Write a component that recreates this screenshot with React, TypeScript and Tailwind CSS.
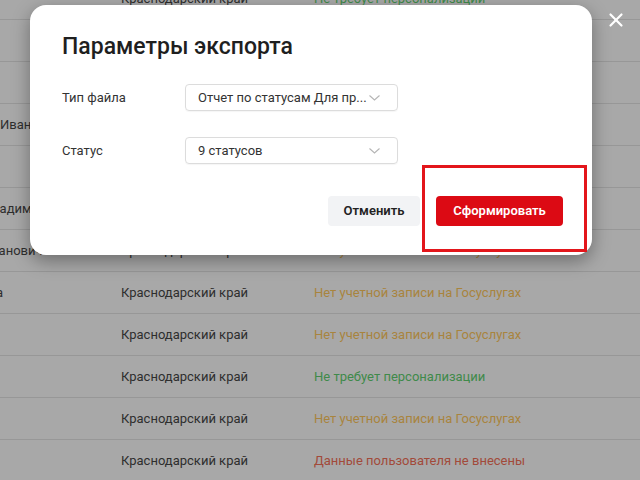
import { X } from 'lucide-react';

interface Row {
  name: string;
  shift: number;
  status: string;
  tone: 'orange' | 'green' | 'red';
}

const rows: Row[] = [
  { name: '', shift: 0, status: 'Не требует персонализации', tone: 'green' },
  { name: '', shift: 0, status: 'Нет учетной записи на Госуслугах', tone: 'orange' },
  { name: '', shift: 0, status: 'Нет учетной записи на Госуслугах', tone: 'orange' },
  { name: 'Иванов', shift: 0, status: 'Не требует персонализации', tone: 'green' },
  { name: '', shift: 0, status: 'Нет учетной записи на Госуслугах', tone: 'orange' },
  { name: 'Владимирович', shift: -16, status: 'Данные пользователя не внесены', tone: 'red' },
  { name: 'Степанович', shift: -30, status: 'Нет учетной записи на Госуслугах', tone: 'orange' },
  { name: 'а', shift: -4, status: 'Нет учетной записи на Госуслугах', tone: 'orange' },
  { name: '', shift: 0, status: 'Нет учетной записи на Госуслугах', tone: 'orange' },
  { name: '', shift: 0, status: 'Не требует персонализации', tone: 'green' },
  { name: '', shift: 0, status: 'Нет учетной записи на Госуслугах', tone: 'orange' },
  { name: '', shift: 0, status: 'Данные пользователя не внесены', tone: 'red' },
];

const toneClass = {
  orange: 'text-[#a8843e]',
  green: 'text-[#3f8a4a]',
  red: 'text-[#a24a3a]',
};

function Chevron() {
  return (
    <svg width="11" height="6" viewBox="0 0 11 6" fill="none" className="shrink-0">
      <path d="M0.5 0.5L5.5 5L10.5 0.5" stroke="#b5b5b5" strokeWidth="1.1" />
    </svg>
  );
}

function SelectBox({ value }: { value: string }) {
  return (
    <div className="flex h-[27px] w-[213px] items-center justify-between rounded-[4px] border border-[#dcdcdc] pl-[12px] pr-[17px] shadow-[0_1px_1px_rgba(0,0,0,0.04)]">
      <span className="truncate text-[13px] text-[#333]">{value}</span>
      <Chevron />
    </div>
  );
}

export default function App() {
  return (
    <div
      className="relative h-[480px] w-[640px] overflow-hidden bg-[#a8a8a8]"
      style={{ fontFamily: 'Roboto, "Noto Sans", sans-serif' }}
    >
      <div className="-mt-[22px] flex flex-col">
        {rows.map((row, i) => (
          <div key={i} className="flex h-[42px] items-center border-b border-[#979797] text-[13px]">
            <div className="w-[121px] overflow-hidden whitespace-nowrap text-[#2e2e2e]">
              <span className="inline-block" style={{ marginLeft: row.shift }}>
                {row.name}
              </span>
            </div>
            <div className="w-[193px] whitespace-nowrap text-[#2e2e2e]">Краснодарский край</div>
            <div className={`whitespace-nowrap ${toneClass[row.tone]}`}>{row.status}</div>
          </div>
        ))}
      </div>

      <div className="absolute left-[30px] top-[5px] flex h-[250px] w-[562px] flex-col rounded-[16px] bg-white pl-[32px] pr-[29px] pt-[28px] shadow-[0_6px_18px_rgba(0,0,0,0.35)]">
        <h2 className="text-[23px] font-medium leading-[28px] text-[#1f1f1f]">Параметры экспорта</h2>
        <div className="mt-[23px] flex flex-col gap-[26px]">
          <div className="flex items-center">
            <span className="w-[123px] text-[13px] text-[#333]">Тип файла</span>
            <SelectBox value="Отчет по статусам Для пр..." />
          </div>
          <div className="flex items-center">
            <span className="w-[123px] text-[13px] text-[#333]">Статус</span>
            <SelectBox value="9 статусов" />
          </div>
        </div>
        <div className="mt-[32px] flex justify-end gap-[16px]">
          <button className="h-[30px] w-[92px] rounded-[4px] bg-[#f2f3f5] text-[13px] font-semibold text-[#222]">
            Отменить
          </button>
          <button className="h-[30px] w-[127px] rounded-[4px] bg-[#dc0a14] text-[13px] font-semibold text-white">
            Сформировать
          </button>
        </div>
      </div>

      <div className="absolute left-[422px] top-[165px] h-[87px] w-[165px] border-[3px] border-[#e3161b]" />

      <X className="absolute left-[605px] top-[9px] text-white" size={22} strokeWidth={2.4} />
    </div>
  );
}
